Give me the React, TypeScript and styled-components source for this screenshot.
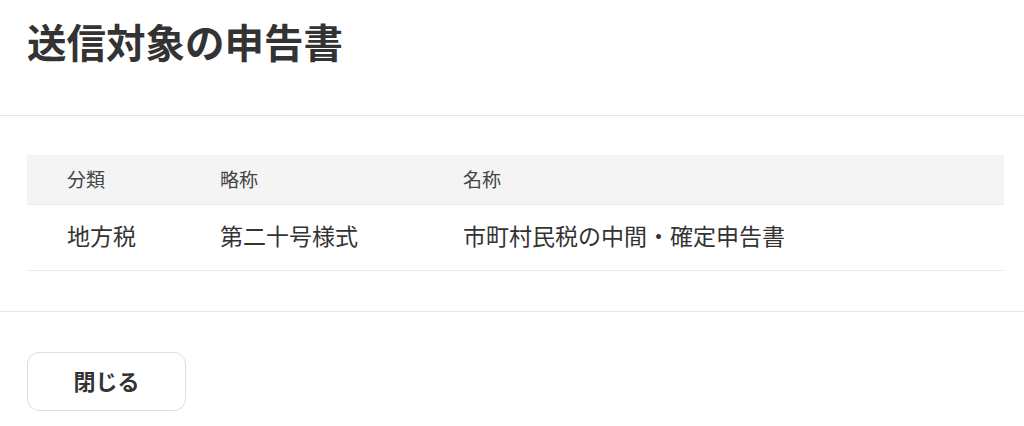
import styled, { createGlobalStyle } from "styled-components";

const GlobalStyle = createGlobalStyle`
  html, body {
    margin: 0;
    padding: 0;
    background: #ffffff;
  }
  body {
    font-family: "Noto Sans CJK JP", "Noto Sans", sans-serif;
    color: #333333;
  }
`;

const Dialog = styled.div`
  width: 1024px;
  display: flex;
  flex-direction: column;
`;

const Header = styled.header`
  padding: 17px 20px 50px 27px;
  border-bottom: 1px solid #e6e6e6;
`;

const Title = styled.h2`
  margin: 0;
  font-size: 39.5px;
  line-height: 48px;
  font-weight: 700;
  color: #333333;
`;

const Body = styled.section`
  padding: 39px 20px 40px 27px;
  border-bottom: 1px solid #e6e6e6;
`;

const Table = styled.table`
  width: 100%;
  border-collapse: collapse;
  table-layout: fixed;
`;

// table cells grow by their padding, so heights below are content heights
const HeadCell = styled.th<{ $width?: number }>`
  width: ${(p) => (p.$width ? `${p.$width}px` : "auto")};
  height: 47px;
  padding: 0 0 2px 40px;
  background: #f4f4f4;
  border-bottom: 1px solid #ebebeb;
  text-align: left;
  font-size: 19px;
  font-weight: 400;
  color: #444444;
`;

const Cell = styled.td`
  height: 60px;
  padding: 0 0 5px 40px;
  border-bottom: 1px solid #ebebeb;
  font-size: 23px;
  color: #333333;
  white-space: nowrap;
`;

const Footer = styled.footer`
  padding: 40px 20px 20px 27px;
`;

const CloseButton = styled.button`
  width: 159px;
  height: 59px;
  padding: 0 0 4px;
  background: #ffffff;
  border: 1px solid #dedede;
  border-radius: 12px;
  font-family: inherit;
  font-size: 22px;
  font-weight: 700;
  color: #333333;
  cursor: pointer;
`;

const rows = [
  { category: "地方税", short: "第二十号様式", name: "市町村民税の中間・確定申告書" },
];

export default function App() {
  return (
    <>
      <GlobalStyle />
      <Dialog>
        <Header>
          <Title>送信対象の申告書</Title>
        </Header>
        <Body>
          <Table>
            <thead>
              <tr>
                <HeadCell $width={113}>分類</HeadCell>
                <HeadCell $width={203}>略称</HeadCell>
                <HeadCell>名称</HeadCell>
              </tr>
            </thead>
            <tbody>
              {rows.map((row) => (
                <tr key={row.short}>
                  <Cell>{row.category}</Cell>
                  <Cell>{row.short}</Cell>
                  <Cell>{row.name}</Cell>
                </tr>
              ))}
            </tbody>
          </Table>
        </Body>
        <Footer>
          <CloseButton>閉じる</CloseButton>
        </Footer>
      </Dialog>
    </>
  );
}
